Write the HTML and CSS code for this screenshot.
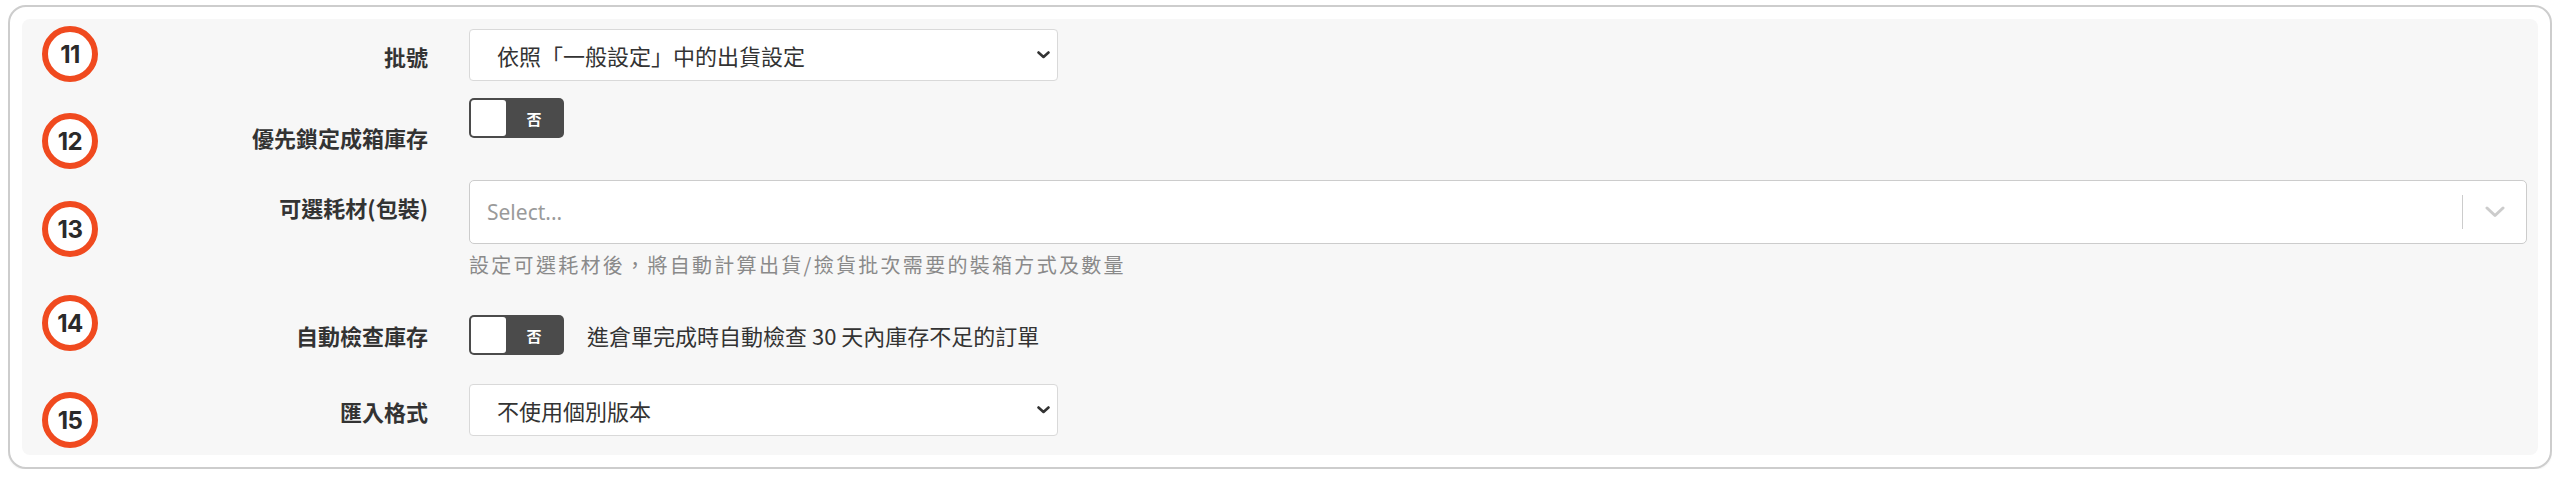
FILE: index.html
```html
<!DOCTYPE html>
<html lang="zh-Hant">
<head>
<meta charset="utf-8">
<title>設定</title>
<link rel="stylesheet" href="styles.css">
</head>
<body>
<div class="frame">
  <div class="panel">
    <span class="badge badge-11">11</span>
    <span class="badge badge-12">12</span>
    <span class="badge badge-13">13</span>
    <span class="badge badge-14">14</span>
    <span class="badge badge-15">15</span>

    <div class="row row-11">
      <label class="label">批號</label>
      <div class="control">
        <div class="select">
          <span class="select-text">依照「一般設定」中的出貨設定</span>
          <svg class="select-caret" width="13" height="8" viewBox="0 0 13 8"><polyline points="1.5,1.5 6.5,6 11.5,1.5" fill="none" stroke="#333" stroke-width="2.6" stroke-linecap="round" stroke-linejoin="round"/></svg>
        </div>
      </div>
    </div>

    <div class="row row-12">
      <label class="label label-low">優先鎖定成箱庫存</label>
      <div class="control">
        <div class="toggle"><span class="knob"></span><span class="toggle-text">否</span></div>
      </div>
    </div>

    <div class="row row-13">
      <label class="label">可選耗材(包裝)</label>
      <div class="control">
        <div class="rselect">
          <span class="placeholder">Select...</span>
          <span class="sep"></span>
          <span class="indicator">
            <svg width="20" height="12" viewBox="0 0 20 12"><polyline points="2,2 10,9.5 18,2" fill="none" stroke="#cccccc" stroke-width="3" stroke-linecap="round" stroke-linejoin="round"/></svg>
          </span>
        </div>
        <p class="help">設定可選耗材後，將自動計算出貨/撿貨批次需要的裝箱方式及數量</p>
      </div>
    </div>

    <div class="row row-14">
      <label class="label label-center">自動檢查庫存</label>
      <div class="control control-inline">
        <div class="toggle"><span class="knob"></span><span class="toggle-text">否</span></div>
        <span class="inline-text">進倉單完成時自動檢查 30 天內庫存不足的訂單</span>
      </div>
    </div>

    <div class="row row-15">
      <label class="label">匯入格式</label>
      <div class="control">
        <div class="select">
          <span class="select-text">不使用個別版本</span>
          <svg class="select-caret" width="13" height="8" viewBox="0 0 13 8"><polyline points="1.5,1.5 6.5,6 11.5,1.5" fill="none" stroke="#333" stroke-width="2.6" stroke-linecap="round" stroke-linejoin="round"/></svg>
        </div>
      </div>
    </div>
  </div>
</div>
</body>
</html>
```

FILE: styles.css
```css
* { box-sizing: border-box; }

html, body {
  background: #ffffff;
}

body {
  margin: 5px 8px 10px 8px;
  font-family: "Noto Sans", "Noto Sans CJK TC", sans-serif;
  color: #333333;
}

.frame {
  border: 2px solid #cdcdcd;
  border-radius: 18px;
  padding: 12px;
  background: #ffffff;
  box-shadow: 0 1px 2px rgba(0,0,0,0.06);
}

.panel {
  position: relative;
  background: #f7f7f7;
  border-radius: 8px;
  padding: 10px 11px 19px 0;
  display: flex;
  flex-direction: column;
}

/* annotation badges over the panel */
.badge {
  position: absolute;
  left: 20px;
  width: 56px;
  height: 56px;
  border: 6px solid #f04a1f;
  border-radius: 50%;
  background: #ffffff;
  display: flex;
  align-items: center;
  justify-content: center;
  font-family: Inter, "Liberation Sans", sans-serif;
  font-weight: 700;
  font-size: 24px;
  color: #2a2a2a;
  letter-spacing: -0.5px;
}
.badge-11 { top: 7px; }
.badge-12 { top: 94px; }
.badge-13 { top: 182px; }
.badge-14 { top: 276px; }
.badge-15 { top: 373px; }

.row {
  display: grid;
  grid-template-columns: 406px 1fr;
  column-gap: 41px;
  align-items: start;
}
.row-11 { margin-bottom: 17px; }
.row-12 { margin-bottom: 28px; }
.row-13 { margin-bottom: 35px; }
.row-14 { margin-bottom: 29px; align-items: center; }

.label {
  text-align: right;
  font-family: "Noto Sans CJK TC", "Noto Sans", sans-serif;
  font-weight: 700;
  font-size: 22px;
  line-height: 30px;
  color: #333333;
  padding-top: 12px;
  white-space: nowrap;
}
.label-low { padding-top: 24px; }
.label-center { padding-top: 0; }

.control {
  min-width: 0;
}
.control-inline {
  display: flex;
  align-items: center;
  gap: 23px;
}

/* native-looking select */
.select {
  width: 589px;
  height: 52px;
  background: #ffffff;
  border: 1px solid #d9d9d9;
  border-radius: 4px;
  display: flex;
  align-items: center;
  padding: 0 7px 0 27px;
}
.select-text {
  flex: 1;
  font-family: "Noto Sans CJK TC", "Noto Sans", sans-serif;
  font-size: 22px;
  color: #333333;
  line-height: 30px;
}
.select-caret { flex: none; }

/* react-select style */
.rselect {
  height: 64px;
  background: #ffffff;
  border: 1px solid #cccccc;
  border-radius: 5px;
  display: flex;
  align-items: center;
  padding-left: 17px;
}
.placeholder {
  flex: 1;
  font-family: "Noto Sans", "Noto Sans CJK TC", sans-serif;
  font-size: 21px;
  color: #9a9a9a;
}
.sep {
  width: 1px;
  height: 34px;
  background: #cccccc;
}
.indicator {
  width: 63px;
  display: flex;
  align-items: center;
  justify-content: center;
}

.help {
  margin: 6px 0 0 0;
  font-family: "Noto Sans CJK TC", "Noto Sans", sans-serif;
  font-size: 20px;
  line-height: 30px;
  letter-spacing: 2.3px;
  color: #8a8a8a;
}

/* toggle */
.toggle {
  width: 95px;
  height: 40px;
  background: #4b4b4b;
  border-radius: 5px;
  padding: 2px;
  display: flex;
}
.knob {
  width: 35px;
  height: 36px;
  background: #ffffff;
  border-radius: 3px;
}
.toggle-text {
  flex: 1;
  display: flex;
  align-items: center;
  justify-content: center;
  font-family: "Noto Sans CJK TC", sans-serif;
  font-size: 15px;
  font-weight: 700;
  color: #ffffff;
}

.inline-text {
  font-family: "Noto Sans CJK TC", "Noto Sans", sans-serif;
  font-size: 22px;
  line-height: 30px;
  color: #333333;
  white-space: nowrap;
}
```
